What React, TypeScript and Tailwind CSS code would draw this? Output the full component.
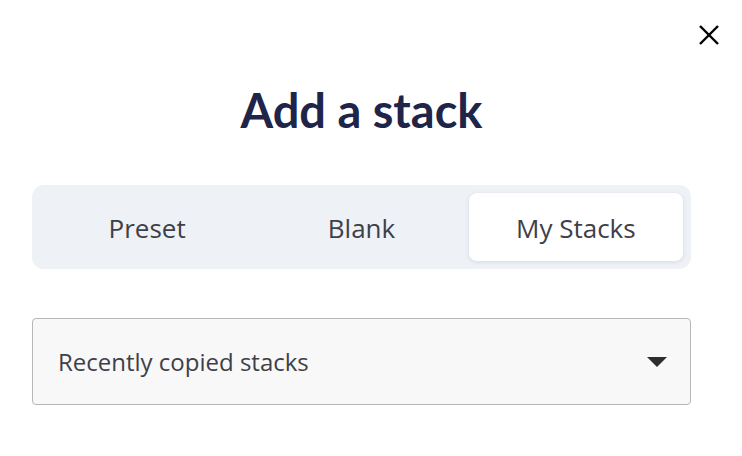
import { useState } from 'react';

// Add-a-stack modal body: title, segmented tabs and a source select.

const TABS = ['Preset', 'Blank', 'My Stacks'];

export default function App() {
  const [active, setActive] = useState('My Stacks');

  return (
    <div
      className="relative w-[742px] h-[456px] bg-white overflow-hidden"
      style={{ fontFamily: '"Open Sans", Lato, sans-serif' }}
    >
      {/* Close button */}
      <button
        type="button"
        aria-label="Close"
        className="absolute right-[22px] top-[24px] w-[22px] h-[22px] flex items-center justify-center text-black"
      >
        <svg viewBox="0 0 22 22" className="w-[22px] h-[22px]" fill="none" stroke="currentColor" strokeWidth={2.4}>
          <line x1="2" y1="2" x2="20" y2="20" />
          <line x1="20" y1="2" x2="2" y2="20" />
        </svg>
      </button>

      <div className="ml-[32px] w-[659px] flex flex-col pt-[80px]">
        <h1 className="text-center text-[47px] leading-[60px] font-bold text-[#1e2548] font-[Lato,sans-serif]">
          Add a stack
        </h1>

        {/* Segmented tabs */}
        <div className="mt-[45px] h-[84px] rounded-[12px] bg-[#eef1f6] p-[8px] grid grid-cols-3">
          {TABS.map((tab) => (
            <button
              key={tab}
              type="button"
              onClick={() => setActive(tab)}
              className={
                tab === active
                  ? 'rounded-[8px] bg-white pt-[3px] text-[26px] text-[#3e4049] shadow-[0_1px_4px_rgba(30,50,90,0.12)]'
                  : 'rounded-[8px] pt-[3px] text-[26px] text-[#3e4049]'
              }
            >
              {tab}
            </button>
          ))}
        </div>

        {/* Select */}
        <div className="mt-[49px] h-[87px] rounded-[4px] border border-[#b7b7b7] bg-[#f8f8f8] flex items-center justify-between pl-[25px] pr-[23px]">
          <span className="text-[24px] text-[#3e4049]">Recently copied stacks</span>
          <svg viewBox="0 0 20 10" className="w-[20px] h-[10px]">
            <polygon points="0,0 20,0 10,10" fill="#2d2d2d" />
          </svg>
        </div>
      </div>
    </div>
  );
}
